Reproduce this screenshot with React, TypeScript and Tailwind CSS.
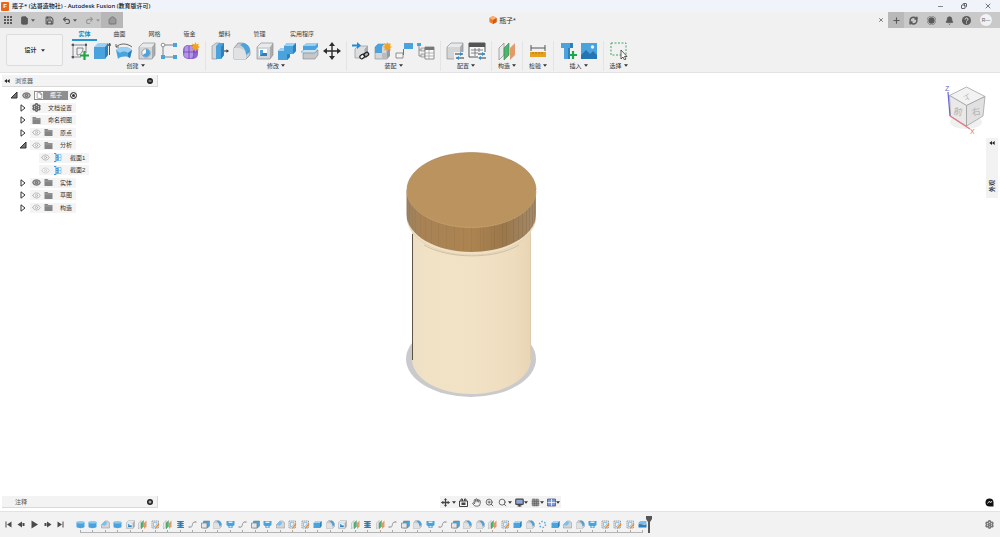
import { useState, type ReactNode } from 'react'
import {
  Bell, CircleHelp, Clock, Copy, Eye, File, Grid3x3, Hand,
  House, Minus, Monitor, Plus, Redo2, RefreshCw, Save, Search, Settings, Undo2, X, ZoomIn,
} from 'lucide-react'

const BLUE = '#4ba3dd'
const LIGHT_BLUE = '#79c0ee'
const DARK_BLUE = '#2f7fba'

function Svg({ children, size = 18 }: { children: ReactNode; size?: number }) {
  return (
    <svg viewBox="0 0 18 18" width={size} height={size} fill="none" aria-hidden="true" className="shrink-0">
      {children}
    </svg>
  )
}

function Caret({ className = 'text-[#333]' }: { className?: string }) {
  return (
    <svg viewBox="0 0 6 4" width="4" height="3" fill="currentColor" aria-hidden="true" className={`shrink-0 ${className}`}>
      <path d="M0 0h6L3 4z" />
    </svg>
  )
}

// Gray solid used as the base of many command icons
function GrayBox() {
  return (
    <>
      <path d="M1 5l4-4h12l-3 4z" fill="#e9eaeb" />
      <path d="M14 5l3-4v12l-3 4z" fill="#a9abae" />
      <path d="M1 5h13v12H1z" fill="#d3d5d7" />
      <path d="M1 5l4-4h12v12l-3 4H1z" stroke="#8d9093" strokeWidth=".7" />
    </>
  )
}

const toolIcons: Record<string, ReactNode> = {
  sketch: (
    <>
      <path d="M2 1v16M0 3h16M15 1v10M0 15h10" stroke="#66696c" strokeWidth=".8" />
      <path d="M6 6h6c0 4-2 7-6 7z" stroke="#77797c" strokeWidth=".9" />
      <path d="M1 2h2v2H1zM14 2h2v2h-2zM1 14h2v2H1z" fill="#55585b" />
      <path d="M13.500 9v9M9 13.500h9" stroke="#1fa447" strokeWidth="2.200" />
    </>
  ),
  extrude: (
    <>
      <path d="M1 5l4-4h10l-3 4z" fill="#9bd0f2" />
      <path d="M12 5l3-4v12l-3 4z" fill={DARK_BLUE} />
      <path d="M1 5h11v12H1z" fill={BLUE} />
      <path d="M16.500 13V2M15 4l1.500-3L18 4" stroke="#444" strokeWidth=".9" />
    </>
  ),
  revolve: (
    <>
      <path d="M1 8c4-4 12-4 16 0l-2 8c-3-2-9-2-12 1z" fill={BLUE} />
      <path d="M1 8c4-4 12-4 16 0l-4 3c-2-2-6-2-8 0z" fill="#9bd0f2" />
      <path d="M13 11l4-3-2 8-2-1z" fill={DARK_BLUE} />
      <path d="M1 5C5 1 12 1 17 5M1 2v3h3" stroke="#555" strokeWidth=".9" />
    </>
  ),
  hole: (
    <>
      <GrayBox />
      <circle cx="8" cy="11" r="4.200" fill="#f5f6f7" stroke="#777" strokeWidth=".6" />
      <path d="M8 11V7a4 4 0 1 1-3.500 6z" fill={BLUE} />
    </>
  ),
  pattern: (
    <>
      <path d="M5 3h9M3 5v8M5 15h8" stroke="#777" strokeWidth=".9" />
      <circle cx="3" cy="3" r="1.800" fill="#fff" stroke="#777" strokeWidth=".8" />
      <path d="M13 1h4v4h-4zM1 13h4v4H1zM13 13h4v4h-4z" fill={BLUE} />
    </>
  ),
  form: (
    <>
      <rect x="1" y="3" width="15" height="14" rx="5" fill="#9068d4" />
      <path d="M3 5c3-2 7-2 9 0v9c-2 3-7 3-10 0z" fill="#b495e8" />
      <path d="M1 10h15M7 4v13M11 6c1 3 1 7 0 10" stroke="#6b45ad" strokeWidth=".8" />
      <path d="M13.500 0l1 2.500L17 1.500l-1 2.500 2 1-2 1 1 2.500-2.500-1-1 2.500-1-2.500L10 8.500 11 6 9 5l2-1-1-2.500 2.500 1z" fill="#f5a21b" />
    </>
  ),
  pushPull: (
    <>
      <path d="M1 4l4-3h4l-3 3v13H1z" fill="#d4d6d8" stroke="#888" strokeWidth=".6" />
      <path d="M5 4l3-3h5v12l-3 4H5z" fill={BLUE} />
      <path d="M10 5l3-4v12l-3 4z" fill={DARK_BLUE} />
      <path d="M13 9h3" stroke="#333" />
      <path d="M15.500 7.200L18 9l-2.500 1.800z" fill="#333" />
    </>
  ),
  fillet: (
    <>
      <path d="M1 6l4-5h3c6 0 9 4 9 9v3l-4 4H1z" fill="#c9cbce" stroke="#85888b" strokeWidth=".7" />
      <path d="M1 6h4c5 0 8 3 8 8v3H1z" fill="#e1e2e4" />
      <path d="M7 3l3-2c5 1 7 4 7 9l-4 3c0-5-2-8-6-10z" fill={BLUE} />
    </>
  ),
  shell: (
    <>
      <GrayBox />
      <path d="M3 7h8v7H3z" fill="#fff" />
      <path d="M4 8h3v3h4v3H4z" fill={BLUE} />
      <path d="M4 14l3-3h4v3z" fill={DARK_BLUE} />
    </>
  ),
  combine: (
    <>
      <path d="M6 4l3-3h9v8l-3 3h-3v3l-3 3H0v-9l3-3h3z" fill={BLUE} />
      <path d="M6 4l3-3h9l-3 3zM0 9l3-3h3v3z" fill="#9bd0f2" />
      <path d="M15 4l3-3v8l-3 3zM9 12h3v3l-3 3z" fill={DARK_BLUE} />
    </>
  ),
  split: (
    <>
      <path d="M2 4l4-3h11v4l-3 3H2z" fill={BLUE} />
      <path d="M2 4l4-3h11l-3 3z" fill="#9bd0f2" />
      <path d="M0 10l3-2h14l-3 2z" fill="#fff" stroke="#4ba3dd" strokeWidth=".6" />
      <path d="M2 11h12l3-3v5l-3 4H2z" fill="#c4c6c8" stroke="#85888b" strokeWidth=".6" />
    </>
  ),
  move: (
    <>
      <path d="M9 2v14M2 9h14" stroke="#2d2d2d" strokeWidth="1.400" />
      <path d="M9 0l3 4H6zM9 18l3-4H6zM0 9l4-3v6zM18 9l-4-3v6z" fill="#2d2d2d" />
    </>
  ),
  insertPart: (
    <>
      <path d="M3 7l3-3h10l-3 3v9H3z" fill="#dcdee0" stroke="#888" strokeWidth=".6" />
      <path d="M13 7l3-3v9l-3 3z" fill="#aaa" />
      <path d="M0 3.500h6" stroke="#1f8ddb" strokeWidth="2" />
      <path d="M5 0l4 3.500L5 7z" fill="#1f8ddb" />
      <rect x="8" y="13" width="5" height="3.500" rx="1.700" transform="rotate(-35 10 15)" fill="#f1f1f1" stroke="#222" strokeWidth="1.200" />
      <rect x="12" y="11" width="5" height="3.500" rx="1.700" transform="rotate(-35 14 13)" stroke="#222" strokeWidth="1.200" />
    </>
  ),
  newComponent: (
    <>
      <path d="M1 5l3-3h12l-3 3v12H1z" fill="#d4d6d8" stroke="#888" strokeWidth=".6" />
      <path d="M1 5h7v6H1zM1 5l3-3h6L8 5z" fill={BLUE} />
      <path d="M8 11h5v6H8z" fill="#b9bbbe" />
      <path d="M13 17l3-3V5l-3 3z" fill="#97999c" />
      <path d="M13.500 0l1 2.500L17 1.500l-1 2.500 2 1-2 1 1 2.500-2.500-1-1 2.500-1-2.500L10 8.500 11 6 9 5l2-1-1-2.500 2.500 1z" fill="#f5a21b" />
    </>
  ),
  joint: (
    <>
      <path d="M9 1h9v6H9z" fill={BLUE} />
      <path d="M1 11h7v5H1z" fill="#f5f5f5" stroke="#777" strokeWidth=".8" />
      <path d="M8.500 13V7" stroke="#d9483b" />
    </>
  ),
  bom: (
    <>
      <path d="M0 1h4v3H0z" fill={BLUE} />
      <path d="M2 4v10h3M2 8h3" stroke="#777" strokeWidth=".8" />
      <path d="M4 6h4v3H4zM4 12h4v3H4z" fill="#e3e3e3" stroke="#777" strokeWidth=".6" />
      <path d="M8 5h9v12H8z" fill="#fafafa" stroke="#777" strokeWidth=".8" />
      <path d="M8 5h9v3H8z" fill="#777" />
      <path d="M8 11h9M8 14h9M12 8v9" stroke="#999" strokeWidth=".7" />
    </>
  ),
  configure: (
    <>
      <GrayBox />
      <path d="M8 10h10v8H8z" fill="#f1f1f1" />
      <path d="M9 12h8M10 16h8" stroke="#333" />
      <path d="M14 10l3 2-3 2zM13 14l-3 2 3 2z" fill="#2f8fd3" />
    </>
  ),
  configTable: (
    <>
      <path d="M1 1h16v14H1z" fill="#f7f7f7" stroke="#555" />
      <path d="M1 1h16v4H1z" fill="#555" />
      <path d="M3 8h12M3 11h12M7 6v8M11 6v8" stroke="#777" strokeWidth=".9" />
      <path d="M10 10h8v8h-8z" fill="#f1f1f1" />
      <path d="M10 12h7M11 16h7" stroke="#333" />
      <path d="M14 10l3 2-3 2zM13 14l-3 2 3 2z" fill="#2f8fd3" />
    </>
  ),
  plane: (
    <>
      <path d="M1 6l5-5v12l-5 5z" fill="#e8e9ea" stroke="#777" strokeWidth=".6" />
      <path d="M6 6l5-5v12l-5 5z" fill="#4db56d" stroke="#35804c" strokeWidth=".6" />
      <path d="M12 6l5-5v12l-5 5z" fill="#e39a6a" />
    </>
  ),
  measure: (
    <>
      <path d="M2 3v6M16 3v6M2 6h14" stroke="#555" />
      <path d="M1 10h16v5H1z" fill="#e5a11f" />
      <path d="M4 10v2M7 10v2M10 10v2M13 10v2" stroke="#9a6a0d" strokeWidth=".7" />
    </>
  ),
  fastener: (
    <>
      <path d="M2 1h12v5H2zM5 6h6v11H5z" fill={BLUE} />
      <path d="M11 1h3v5h-3zM9 6h2v11H9z" fill={DARK_BLUE} />
      <path d="M14 9v8M10 13h8" stroke="#1fa447" strokeWidth="2.200" />
    </>
  ),
  canvas: (
    <>
      <path d="M1 1h16v16H1z" fill={BLUE} />
      <path d="M1 13l5-5 4 4 3-3 4 4v4H1z" fill="#2675b3" />
      <circle cx="12.500" cy="5" r="1.700" fill="#eaf6ff" />
    </>
  ),
  select: (
    <>
      <path d="M1 1h15v12H1z" stroke="#39a95f" strokeDasharray="2 1.500" />
      <path d="M11 8v9l2-2 1.500 3 1.500-1-1.500-2.500H17z" fill="#fff" stroke="#333" strokeWidth=".8" />
    </>
  ),
}

const timelineIcons: Record<string, ReactNode> = {
  cyl: (
    <>
      <path d="M1 4v10c2 3 14 3 16 0V4z" fill={BLUE} />
      <ellipse cx="9" cy="4.500" rx="8" ry="2.500" fill="#8dcaf0" />
    </>
  ),
  chamfer: (
    <>
      <path d="M1 9l7-7h5l4 3v11H1z" fill="#d3d5d8" stroke="#8b8e92" />
      <path d="M1 9l7-7 5 4-6 6z" fill={LIGHT_BLUE} />
    </>
  ),
  shell: toolIcons.shell,
  plane: toolIcons.plane,
  sketch: (
    <>
      <path d="M2 2h13v14H2z" fill="#eceef0" stroke="#8c9094" strokeWidth="1.600" strokeDasharray="3 1" />
      <path d="M5 5h7v3l-4 5H5z" stroke="#6ea6cf" strokeWidth="1.200" />
      <path d="M17 8l-6 8-3 2 1-4 6-7z" fill="#f08a2b" />
    </>
  ),
  coil: <path d="M2 3h13L3 7h12L3 11h12L3 15h13" stroke={DARK_BLUE} strokeWidth="2" />,
  spline: (
    <>
      <path d="M3 14c9 3 2-11 12-10" stroke="#85888c" strokeWidth="1.600" />
      <path d="M1 12h4v4H1zM13 2h4v4h-4z" fill="#b5b8bb" />
    </>
  ),
  extrude: (
    <>
      <path d="M5 2h12v10l-4 4H5z" fill={BLUE} stroke="#6c7379" />
      <path d="M1 6h11v10H1z" fill="#e4e6e8" stroke="#777c81" strokeWidth="1.400" />
    </>
  ),
  fillet: toolIcons.fillet,
  loft: (
    <>
      <path d="M1 2h16v8l-4 3v3H5v-3l-4-3z" fill={BLUE} />
      <path d="M5 3h8v3H5zM7 12h4v3H7z" fill="#d9edfa" />
    </>
  ),
  circular: <circle cx="9" cy="9" r="6" stroke="#5cabe0" strokeWidth="3" strokeDasharray="3 3.280" />,
  solid: (
    <>
      <path d="M1 6l5-4h11v10l-3 4H1z" fill={BLUE} />
      <path d="M1 6l5-4h11l-3 4z" fill="#a5d7f5" />
      <path d="M14 6l3-4v10l-3 4z" fill={DARK_BLUE} />
    </>
  ),
  split: (
    <>
      <path d="M1 5l4-3h12v6H1z" fill={LIGHT_BLUE} />
      <path d="M1 9c5-3 10 3 16-1v7H1z" fill={DARK_BLUE} />
    </>
  ),
}

const features = [
  'cyl', 'cyl', 'chamfer', 'cyl', 'shell', 'plane', 'sketch', 'plane', 'coil', 'spline',
  'extrude', 'fillet', 'loft', 'spline', 'extrude', 'loft', 'chamfer', 'sketch', 'sketch', 'solid',
  'fillet', 'shell', 'plane', 'coil', 'plane', 'spline', 'extrude', 'fillet', 'loft', 'spline',
  'extrude', 'fillet', 'fillet', 'plane', 'sketch', 'solid', 'fillet', 'circular', 'solid', 'chamfer',
  'fillet', 'loft', 'sketch', 'sketch', 'sketch', 'split',
]

const tabs = ['实体', '曲面', '网格', '钣金', '塑料', '管理', '实用程序']

const toolGroups = [
  { label: '创建', width: 'w-[140px]', tools: ['sketch', 'extrude', 'revolve', 'hole', 'pattern', 'form'] },
  { label: '修改', width: 'w-[141px]', tools: ['pushPull', 'fillet', 'shell', 'combine', 'split', 'move'] },
  { label: '装配', width: 'w-[94px]', tools: ['insertPart', 'newComponent', 'joint', 'bom'] },
  { label: '配置', width: 'w-[51px]', tools: ['configure', 'configTable'] },
  { label: '构造', width: 'w-[31px]', tools: ['plane'] },
  { label: '检验', width: 'w-[31px]', tools: ['measure'] },
  { label: '插入', width: 'w-[50px]', tools: ['fastener', 'canvas'] },
  { label: '选择', width: 'w-[30px]', tools: ['select'] },
]

type TreeRow = {
  label: string
  icon: 'gear' | 'folder' | 'section'
  eye?: 'on' | 'off' | 'dim'
  open?: boolean
  child?: boolean
}

const treeRows: TreeRow[] = [
  { label: '文档设置', icon: 'gear' },
  { label: '命名视图', icon: 'folder' },
  { label: '原点', icon: 'folder', eye: 'off' },
  { label: '分析', icon: 'folder', eye: 'off', open: true },
  { label: '截面1', icon: 'section', eye: 'off', child: true },
  { label: '截面2', icon: 'section', eye: 'dim', child: true },
  { label: '实体', icon: 'folder', eye: 'on' },
  { label: '草图', icon: 'folder', eye: 'off' },
  { label: '构造', icon: 'folder', eye: 'off' },
]

function TitleBar() {
  return (
    <header className="flex h-3 items-center bg-[#f0f3fa] pl-px text-[6px] text-[#111]">
      <span className="mr-[3px] flex h-[9px] w-2 items-center justify-center rounded-[1px] bg-[#e8651a] font-bold text-white">F</span>
      <h1 className="font-['Noto_Sans','Noto_Sans_CJK_SC',sans-serif] font-medium">瓶子* (达哥造物社) - Autodesk Fusion (教育版许可)</h1>
      <div className="ml-auto flex items-center text-[#333]">
        <button aria-label="最小化" className="flex w-6 justify-center"><Minus size={7} /></button>
        <button aria-label="还原" className="flex w-6 justify-center"><Copy size={6} strokeWidth={3} className="-scale-x-100" /></button>
        <button aria-label="关闭" className="flex w-6 justify-center"><X size={8} /></button>
      </div>
    </header>
  )
}

function DocumentBar() {
  return (
    <div className="flex h-4 bg-[#c9c9c9] text-[#5a5a5a]">
      <div className="flex w-[101px] items-center gap-2 pl-1">
        <button aria-label="数据面板">
          <svg viewBox="0 0 8 8" width="8" height="8" fill="currentColor">
            <path d="M0 0h2v2H0zM3 0h2v2H3zM6 0h2v2H6zM0 3h2v2H0zM3 3h2v2H3zM6 3h2v2H6zM0 6h2v2H0zM3 6h2v2H3zM6 6h2v2H6z" />
          </svg>
        </button>
        <button aria-label="文件" className="flex items-center gap-[2px]">
          <File size={9} fill="currentColor" /><Caret className="text-[#5a5a5a]" />
        </button>
        <button aria-label="保存" className="ml-[2px]"><Save size={9} strokeWidth={3} /></button>
        <button aria-label="撤消" className="flex items-center gap-[2px]">
          <Undo2 size={9} strokeWidth={3} /><Caret className="text-[#5a5a5a]" />
        </button>
        <button aria-label="重做" className="flex items-center gap-[2px] text-[#999]">
          <Redo2 size={9} strokeWidth={3} /><Caret className="text-[#999]" />
        </button>
      </div>
      <button aria-label="主页" className="flex w-[22px] items-center justify-center bg-[#b7b7b7] text-[#808080]">
        <House size={9} strokeWidth={3} fill="#999" />
      </button>
      <div className="flex flex-1 items-center bg-[#f1f1f1]">
        <div className="flex flex-1 items-center justify-center gap-[2px] pl-1 text-[7px] text-[#333]">
          <svg viewBox="0 0 10 10" width="8" height="8" aria-hidden="true">
            <path d="M5 0l4.500 2.500v5L5 10 .5 7.500v-5z" fill="#ee7a2c" />
            <path d="M5 0l4.500 2.500L5 5 .5 2.500z" fill="#fbb070" />
            <path d="M5 5l4.500-2.500v5L5 10z" fill="#cf5a13" />
          </svg>
          瓶子*
        </div>
        <button aria-label="关闭选项卡" className="pr-1"><X size={6} strokeWidth={3} /></button>
      </div>
      <button aria-label="新建设计" className="flex w-4 items-center justify-center bg-[#b9b9b9]"><Plus size={9} strokeWidth={3} /></button>
      <div className="flex w-24 items-center justify-between pl-[5px] pr-2">
        <button aria-label="扩展"><RefreshCw size={9} strokeWidth={4} /></button>
        <button aria-label="作业状态"><Clock size={9} fill="#5a5a5a" stroke="#c9c9c9" strokeWidth={3} className="rounded-full bg-[#5a5a5a]" /></button>
        <button aria-label="通知"><Bell size={9} fill="currentColor" /></button>
        <button aria-label="帮助">
          <Svg size={9}>
            <circle cx="9" cy="9" r="9" fill="#5a5a5a" />
            <path d="M6 7c0-4 6-4 6-.5C12 9 9 8.500 9 11M9 13v2" stroke="#e8e8e8" strokeWidth="2" />
          </Svg>
        </button>
        <button className="flex size-3 items-center justify-center rounded-full bg-[#f2f2f2] text-[5px]">R—</button>
      </div>
    </div>
  )
}

function Ribbon() {
  const [activeTab, setActiveTab] = useState(tabs[0])

  return (
    <div className="flex h-[45px] border-b border-[#e4e4e4] bg-[#f1f1f1]">
      <div className="w-[66px] py-[6px] pl-[6px] pr-[3px]">
        <button className="flex h-8 w-full items-center justify-center gap-1 rounded-[2px] border border-[#dcdcdc] bg-[#f4f4f4] text-[6px] font-bold text-[#333]">
          设计 <Caret />
        </button>
      </div>
      <div>
        <nav className="flex h-[13px] items-end pl-px">
          {tabs.map((tab) => (
            <button
              key={tab}
              onClick={() => setActiveTab(tab)}
              className={`flex h-[11px] justify-center text-[6px] ${tab.length > 2 ? 'w-[50px]' : 'w-[35px]'}`}
            >
              <span className={`h-[11px] border-b-2 leading-[9px] ${tab.length > 2 ? 'px-0' : 'px-[6px]'} ${activeTab === tab ? 'border-[#2496d4] font-bold text-[#1b87c7]' : 'border-transparent text-[#444]'}`}>
                {tab}
              </span>
            </button>
          ))}
        </nav>
        <div className="flex">
          {toolGroups.map((group) => (
            <section key={group.label} className={`h-[30px] border-r border-[#e4e4e4] px-[3px] last:border-transparent ${group.width}`}>
              <div className={`flex h-5 items-center ${group.tools.length > 1 ? 'justify-between' : 'justify-center'}`}>
                {group.tools.map((tool) => (
                  <button key={tool} aria-label={tool} className="flex w-[22px] justify-center">
                    <Svg>{toolIcons[tool]}</Svg>
                  </button>
                ))}
              </div>
              <button className="flex h-[9px] w-full items-center justify-center gap-[2px] text-[6px] text-[#333]">
                {group.label} <Caret />
              </button>
            </section>
          ))}
        </div>
      </div>
    </div>
  )
}

function PanelHeader({ label, collapse }: { label: string; collapse?: boolean }) {
  return (
    <div className="ml-[2px] flex h-3 w-[156px] items-center border-b border-r border-[#d9d9d9] bg-[#f3f3f3] pl-[2px] pr-1 text-[6px] text-[#555]">
      <span className="w-[11px]">
        {collapse && (
          <svg viewBox="0 0 8 6" width="6" height="4" fill="#222" aria-hidden="true"><path d="M4 0v6L0 3zM8 0v6L4 3z" /></svg>
        )}
      </span>
      {label}
      <button aria-label={`${label}选项`} className="ml-auto">
        <svg viewBox="0 0 8 8" width="6" height="6">
          <circle cx="4" cy="4" r="4" fill="#222" />
          <path d={collapse ? 'M2 4h4' : 'M2 4h4M4 2v4'} stroke="#fff" strokeWidth="1" />
        </svg>
      </button>
    </div>
  )
}

function Expander({ open }: { open?: boolean }) {
  return (
    <button aria-label={open ? '折叠' : '展开'} className="flex w-[10px] shrink-0 justify-center">
      <svg viewBox="0 0 8 8" width="8" height="8">
        {open
          ? <path d="M7 1v6H1z" fill="#777" stroke="#333" />
          : <path d="M2 .8L6 4 2 7.200z" fill="#fff" stroke="#333" />}
      </svg>
    </button>
  )
}

function Visibility({ state }: { state: 'on' | 'off' | 'dim' }) {
  return (
    <button aria-label="可见性" className="flex w-3 shrink-0 justify-center">
      {state === 'on' && <Eye size={9} className="text-[#777]" fill="#bbb" strokeWidth={3} />}
      {state === 'off' && <Eye size={9} className="text-[#aaa]" strokeWidth={2} />}
      {state === 'dim' && <Eye size={9} className="text-[#ccc]" strokeWidth={2} />}
    </button>
  )
}

function RowIcon({ icon }: { icon: TreeRow['icon'] }) {
  if (icon === 'gear') return <Settings size={9} strokeWidth={4} className="text-[#666]" />
  if (icon === 'section') {
    return (
      <Svg size={9}>
        <path d="M2 1h4v16H2M6 5h4v9H6M10 2v14M6 9h5" stroke="#3b9bdc" strokeWidth="2" />
        <path d="M10 3h6v12h-6M10 9h6" stroke={LIGHT_BLUE} strokeWidth="1.600" />
      </Svg>
    )
  }
  return (
    <Svg size={9}>
      <path d="M1 2h6l2 2h8v12H1z" fill="#858585" />
      <path d="M1 6h16" stroke="#bbb" />
    </Svg>
  )
}

function BrowserTree() {
  return (
    <ul className="mt-[2px] grid h-[125px] w-[160px] grid-rows-10 text-[6px] text-[#333]">
      <li className="flex items-center pl-[9px]">
        <Expander open />
        <div className="ml-px flex h-[10px] items-center bg-[#f3f3f3]">
          <Visibility state="on" />
          <span className="ml-[2px] flex h-[9px] items-center bg-[#8f8f8f] pr-[6px] pl-px text-white">
            <span className="mr-[7px] flex h-[7px] w-2 items-center justify-center bg-white text-[#666]">
              <File size={7} strokeWidth={2} />
            </span>
            瓶子
          </span>
          <label className="ml-[2px] flex">
            <input type="radio" name="active" defaultChecked aria-label="激活零部件" className="size-[7px] appearance-none rounded-full border border-[#444] bg-[#333] shadow-[inset_0_0_0_1px_white]" />
          </label>
        </div>
      </li>
      {treeRows.map((row, i) => (
        <li key={i} className={`flex items-center ${row.child ? 'pl-[37px]' : 'pl-[18px]'}`}>
          {!row.child && <Expander open={row.open} />}
          <div className="ml-[2px] flex h-[10px] items-center bg-[#f4f4f4] pr-1">
            {row.eye && <Visibility state={row.eye} />}
            <span className="flex w-[13px] justify-center"><RowIcon icon={row.icon} /></span>
            <span className={row.child ? 'pl-[6px]' : 'pl-[5px]'}>{row.label}</span>
          </div>
        </li>
      ))}
    </ul>
  )
}

// The modelled part: knurled cap over a cream container standing on a ring
function Bottle() {
  const ridges = [-64, -62, -59, -56, -51, -46, -40, -33, -25, -17, -8, 0, 9, 12, 20, 23, 31, 35, 42, 47, 51, 55, 58, 61, 63]

  return (
    <svg viewBox="0 73 1000 438" className="absolute inset-0 size-full" role="img" aria-label="瓶子">
      <defs>
        <linearGradient id="body">
          <stop offset="0" stopColor="#ecdfc4" />
          <stop offset=".12" stopColor="#f1e2c6" />
          <stop offset=".5" stopColor="#f2e2c5" />
          <stop offset=".85" stopColor="#eedcbe" />
          <stop offset="1" stopColor="#e8d5b5" />
        </linearGradient>
        <linearGradient id="cap">
          <stop offset="0" stopColor="#9b8262" />
          <stop offset=".12" stopColor="#a88255" />
          <stop offset=".5" stopColor="#ac8451" />
          <stop offset=".75" stopColor="#9b774b" />
          <stop offset="1" stopColor="#a28b6d" />
        </linearGradient>
      </defs>
      <ellipse cx="471" cy="359" rx="65" ry="38" fill="#cacacc" />
      <path d="M412 230v129c0 19 26 35 59.500 35s59.500-16 59.500-35V230z" fill="url(#body)" />
      <path d="M412.500 234v126" stroke="#5c5344" />
      <path d="M530.500 234v126" stroke="#d5c4a5" strokeWidth=".6" />
      <path d="M407 218c2 21 28 37 64 37s62-16 65-37" fill="#efe0c5" stroke="#dccbad" strokeWidth=".7" />
      <path d="M424 245c24 14 70 15 95 0" fill="none" stroke="#c2b398" strokeWidth=".7" />
      <path d="M406.500 190v24c0 21 29 38 65 38s64.500-17 64.500-38v-24z" fill="url(#cap)" />
      {ridges.map((dx) => {
        const y = 190 + 37 * Math.sqrt(1 - (dx / 65) ** 2)
        return <path key={dx} d={`M${471.5 + dx} ${y}v24`} stroke={dx > 20 ? '#805f36' : '#957044'} strokeWidth=".6" opacity=".45" />
      })}
      <ellipse cx="471.500" cy="190" rx="64.500" ry="37.500" fill="#bb935e" />
      <path d="M407 191c0 20 29 36.500 64.500 36.500S536 211 536 191" fill="none" stroke="#c6a16e" strokeWidth=".8" />
      <path d="M407 190c0-21 29-37.500 64.500-37.500S536 169 536 190" fill="none" stroke="#a17b4b" strokeWidth=".6" />
    </svg>
  )
}

function ViewCube() {
  return (
    <svg viewBox="942 80 56 56" width="56" height="56" role="img" aria-label="ViewCube" className="shrink-0">
      <ellipse cx="966" cy="122" rx="16" ry="7" fill="#f0f0f0" />
      <path d="M966.500 87L985 96.500l-18.500 9-17-10z" fill="#f2f2f2" stroke="#999" strokeWidth=".7" />
      <path d="M949.500 95.500l17 10V126l-16-10z" fill="#e9e9e9" stroke="#999" strokeWidth=".7" />
      <path d="M985 96.500l-18.500 9V126l16.500-10z" fill="#e1e1e1" stroke="#999" strokeWidth=".7" />
      <g fill="#b0b0b0" fontSize="9" fontFamily="Noto Sans CJK SC, sans-serif" textAnchor="middle">
        <text x="958" y="115" transform="rotate(12 958 112)">前</text>
        <text x="976" y="115" transform="rotate(-12 976 112)">右</text>
        <text x="967" y="99" fontSize="7" transform="rotate(150 967 97)">上</text>
      </g>
      <path d="M948 92l2 24" stroke="#6a66cf" strokeWidth="1.200" />
      <path d="M950 116l20 13" stroke="#e2787c" strokeWidth="1.200" />
      <g fontSize="7" fontFamily="Liberation Sans, sans-serif">
        <text x="945" y="91" fill="#6a66cf">Z</text>
        <text x="970" y="134" fill="#ee6267">X</text>
      </g>
    </svg>
  )
}

function NavigationBar() {
  return (
    <div className="flex h-3 items-center gap-[3px] bg-[#f3f3f3] px-px text-[#444]">
      <button aria-label="动态观察" className="flex items-center gap-[2px]">
        <Svg size={9}>
          <path d="M9 2v14M1 9h16" stroke="currentColor" strokeWidth="2" />
          <path d="M9 0l3 4H6zM9 18l3-4H6zM0 9l4-3v6zM18 9l-4-3v6z" fill="currentColor" />
          <ellipse cx="9" cy="9" rx="6" ry="3" stroke="currentColor" />
        </Svg>
        <Caret />
      </button>
      <button aria-label="观察方向">
        <Svg size={9}>
          <path d="M1 6h16v11H1zM4 6V2h3v4M11 6V2h3v4" stroke="currentColor" strokeWidth="2" />
          <path d="M5 9h8v5H5z" fill="currentColor" />
        </Svg>
      </button>
      <button aria-label="平移" className="px-px"><Hand size={9} strokeWidth={2} /></button>
      <button aria-label="缩放" className="pr-px"><ZoomIn size={9} strokeWidth={2} /></button>
      <button aria-label="缩放窗口" className="flex items-center gap-px"><Search size={9} strokeWidth={2} /><Caret /></button>
      <button aria-label="显示设置" className="flex items-center"><Monitor size={9} strokeWidth={3} fill="#8fa8d8" /><Caret /></button>
      <button aria-label="网格和捕捉" className="flex items-center"><Grid3x3 size={9} strokeWidth={1} fill="#999" /><Caret /></button>
      <button aria-label="视口" className="flex items-center">
        <Svg size={9}>
          <path d="M1 2h16v14H1z" fill="#7f9cd4" stroke="#45526b" strokeWidth="1.500" />
          <path d="M9 2v14M1 9h16" stroke="#fff" strokeWidth="1.500" />
        </Svg>
        <Caret />
      </button>
    </div>
  )
}

function Workspace() {
  return (
    <main className="relative flex flex-1 flex-col justify-between bg-white">
      <Bottle />
      <div className="relative flex items-start justify-between pt-[2px]">
        <aside>
          <PanelHeader label="浏览器" collapse />
          <BrowserTree />
        </aside>
        <aside className="flex flex-col items-end pr-[2px] pt-[5px]">
          <ViewCube />
          <button className="mt-[2px] flex h-[60px] w-3 flex-col items-center justify-between bg-[#f2f2f2] pb-[6px] pt-[3px] text-[6px] text-[#222]">
            <svg viewBox="0 0 8 6" width="6" height="4" fill="#222" aria-hidden="true"><path d="M4 0v6L0 3zM8 0v6L4 3z" /></svg>
            <span className="rotate-180 leading-[8px] font-medium [text-orientation:sideways] [writing-mode:vertical-rl]">外观</span>
          </button>
        </aside>
      </div>
      <div className="relative grid grid-cols-[160px_1fr_160px] pb-[3px]">
        <PanelHeader label="注释" />
        <div className="flex justify-center"><NavigationBar /></div>
        <div className="flex items-center justify-end pr-[6px]">
          <button aria-label="助手">
            <Svg size={9}>
              <path d="M9 1a8 8 0 1 0 0 16h8V9a8 8 0 0 0-8-8z" fill="#111" />
              <path d="M5 11l4-5 2 4 3-4" stroke="#ccc" strokeWidth="2" />
            </Svg>
          </button>
        </div>
      </div>
    </main>
  )
}

const playback = [
  { label: '转到开头', d: 'M3 3h2v12H3zM15 3v12L6 9z' },
  { label: '上一步', d: 'M10 3v12L1 9zM11 6h4v6h-4z' },
  { label: '播放', d: 'M3 1l13 8-13 8z' },
  { label: '下一步', d: 'M8 3v12l9-6zM3 6h4v6H3z' },
  { label: '转到结尾', d: 'M13 3h2v12h-2zM3 3v12l9-6z' },
]

function TimelineBar() {
  return (
    <footer className="flex h-[26px] items-center border-t border-[#e2e2e2] bg-[#f2f2f2] pl-[2px] pr-[6px]">
      <div className="flex w-[72px] text-[#4a4a4a]">
        {playback.map((step) => (
          <button key={step.label} aria-label={step.label} className="flex w-[13px] justify-center">
            <Svg size={9}><path d={step.d} fill="currentColor" /></Svg>
          </button>
        ))}
      </div>
      <div className="flex w-[575px] pt-[3px]">
        {features.map((feature, i) => (
          <div key={i} className="flex flex-1 flex-col items-center">
            <button aria-label={feature} className="flex h-[11px] items-center">
              <Svg size={9}>{timelineIcons[feature]}</Svg>
            </button>
            <span className="h-[2px] w-px bg-[#aaa]" />
            <span className={`h-px bg-[#b5b5b5] ${i === 0 ? 'w-1/2 self-end' : i === features.length - 1 ? 'w-1/2 self-start' : 'w-full'}`} />
          </div>
        ))}
      </div>
      <svg viewBox="0 0 6 17" width="6" height="17" className="-ml-[3px] shrink-0" aria-hidden="true">
        <path d="M0 0h6v3L4 6v11H2V6L0 3z" fill="#555" />
      </svg>
      <button aria-label="时间轴设置" className="ml-auto"><Settings size={9} strokeWidth={4} className="text-[#777]" /></button>
    </footer>
  )
}

export default function App() {
  return (
    <div lang="zh-CN" className="flex min-h-screen flex-col overflow-hidden bg-white font-['Liberation_Sans','Noto_Sans_CJK_SC',sans-serif] leading-none select-none">
      <TitleBar />
      <DocumentBar />
      <Ribbon />
      <Workspace />
      <TimelineBar />
    </div>
  )
}
